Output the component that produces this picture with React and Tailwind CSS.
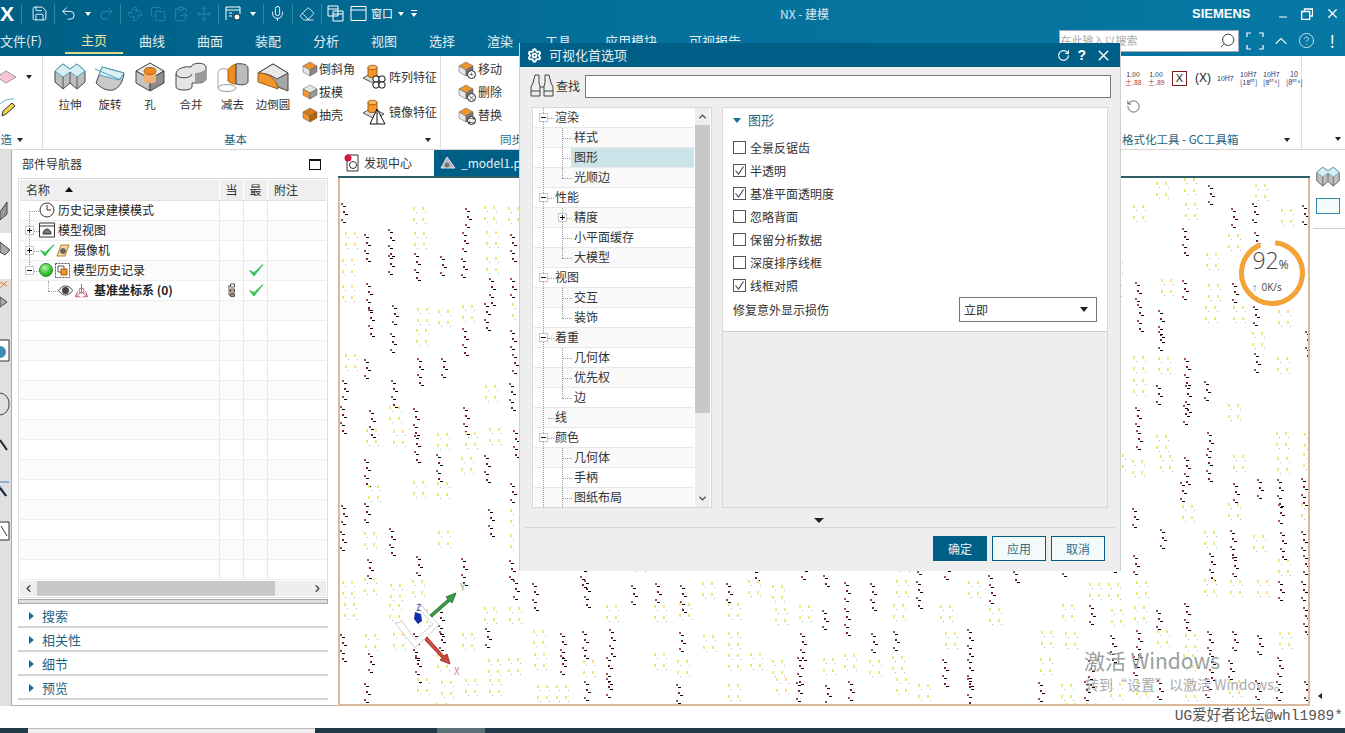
import React from 'react';
import { Save, Undo2, Redo2, Copy, ClipboardPaste, Fan, Move, Mic, Eraser, Minus, X, Search, ChevronUp, ChevronDown, ChevronLeft, ChevronRight, CircleHelp, RotateCw, RotateCcw, Settings } from 'lucide-react';

const menus = ['曲线', '曲面', '装配', '分析', '视图', '选择', '渲染', '工具'];

// canvas speckle, seeded so every run draws the same picture
function makeDots() {
  let s = 4711;
  const r = (n) => {
    s = (s + 0x6d2b79f5) | 0;
    let t = Math.imul(s ^ (s >>> 15), 1 | s);
    t = (t + Math.imul(t ^ (t >>> 7), 61 | t)) ^ t;
    return ((t ^ (t >>> 14)) >>> 0) % n;
  };
  const out = [];
  for (let cy = 0; cy < 22; cy++) {
    for (let cx = 0; cx < 41; cx++) {
      const t = r(10);
      const x = cx * 24 + r(6);
      const y = cy * 25 + r(8);
      if (t < 3) {
        const rows = 3 + r(2);
        for (let i = 0; i < rows; i++) {
          const dx = i % 2 ? 2 : 0;
          out.push(<rect key={`a${cx}-${cy}-${i}`} x={x + dx} y={y + i * 8} width="2" height="2" fill={i % 2 ? '#7a1f3a' : '#a04a66'} />);
          out.push(<rect key={`b${cx}-${cy}-${i}`} x={x + dx + 2} y={y + i * 8 + 3} width="3" height="1" fill="#000" />);
        }
      } else if (t < 6) {
        for (const ox of [0, 9]) {
          for (const oy of [0, 11]) {
            out.push(<rect key={`c${cx}-${cy}-${ox}-${oy}`} x={x + ox} y={y + oy} width="2" height="3" fill="#efe67e" />);
            out.push(<rect key={`d${cx}-${cy}-${ox}-${oy}`} x={x + ox + 3} y={y + oy + 5} width="1" height="1" fill="#b5b5c0" />);
          }
        }
      }
    }
  }
  return out;
}
const dots = makeDots();

function Caret({ className = '' }) {
  return <span className={`inline-block w-0 h-0 border-x-[3px] border-x-transparent border-t-[4px] border-t-[#222] ${className}`}></span>;
}

function Iso({ size = 32, top = '#e8e8e8', left = '#c4c4c4', right = '#8d8d8d', stroke = '#444', children }) {
  return (
    <svg width={size} height={size} viewBox="0 0 32 32">
      <polygon points="16,2 30,10 16,18 2,10" fill={top} stroke={stroke} />
      <polygon points="2,10 16,18 16,30 2,22" fill={left} stroke={stroke} />
      <polygon points="16,18 30,10 30,22 16,30" fill={right} stroke={stroke} />
      {children}
    </svg>
  );
}

function ExtrudeIcon({ size = 32 }) {
  return (
    <svg width={size} height={size} viewBox="0 0 32 32">
      <path d="M1 10 9 3l7 5 7-5 8 7v11l-8 7-7-6-7 6-8-7z" fill="#bdbdbd" stroke="#444" />
      <path d="M1 10 9 3l7 5 7-5 8 7-8 6-7-5-7 5z" fill="#d8eef4" stroke="#4aa3bd" />
      <path d="M9 16v12M23 16v12M16 11v11" stroke="#555" fill="none" />
    </svg>
  );
}
function RevolveIcon() {
  return (
    <svg width="32" height="32" viewBox="0 0 32 32">
      <path d="M2 22 8 6l22 6c-1 9-5 15-11 17-7 1-12-2-17-7z" fill="#c9c9c9" stroke="#444" />
      <path d="M8 6l22 6-5 7-20-5z" fill="#dff0f5" stroke="#4aa3bd" />
      <path d="M1 8l26 11" stroke="#4aa3bd" fill="none" />
    </svg>
  );
}
function HoleIcon() {
  return (
    <Iso>
      <path d="M10 10v10c0 3 12 3 12 0V10z" fill="#eeb072" />
      <ellipse cx="16" cy="10" rx="6" ry="3.5" fill="#f08c1e" stroke="#a85f10" />
    </Iso>
  );
}
function UniteIcon() {
  return (
    <svg width="32" height="32" viewBox="0 0 32 32">
      <path d="M1 13v13c0 4 16 4 16 0v-4h6c4 0 8-2 8-4V6c0-5-14-5-15 0-5-1-15 1-15 7z" fill="#e6e6e6" stroke="#444" />
      <path d="M20 22c4 0 11-1 11-5V6c0 4-7 6-11 6z" fill="#9a9a9a" />
      <path d="M1 13c1 5 15 5 16 0" fill="none" stroke="#444" />
    </svg>
  );
}
function SubtractIcon() {
  return (
    <svg width="32" height="32" viewBox="0 0 32 32">
      <ellipse cx="10" cy="27" rx="9" ry="3.5" fill="none" stroke="#999" />
      <path d="M1 11v16M19 22V8" stroke="#aaa" fill="none" />
      <path d="M11 9c3-5 8-6 8-6v20c-3 0-6-1-8-3z" fill="#f08c1e" stroke="#a85f10" />
      <path d="M19 3c4-1 12 0 12 4v14c0 2-6 4-12 2z" fill="#bbb" stroke="#444" />
      <path d="M1 11c2-4 6-4 10-2" fill="none" stroke="#999" />
    </svg>
  );
}
function BlendIcon() {
  return (
    <svg width="32" height="32" viewBox="0 0 32 32">
      <path d="M1 12 16 3l15 9v18l-10-4C18 18 10 13 1 12z" fill="#a6a6a6" stroke="#444" />
      <path d="M1 12 16 3l15 9-11 6C14 14 8 12 1 12z" fill="#e8e8e8" stroke="#444" />
      <path d="M1 12c10 0 19 6 20 16l-20-7z" fill="#f0962c" stroke="#a85f10" />
    </svg>
  );
}

function SmallIso({ top = '#e6e6e6', left = '#f0962c', right = '#8d8d8d' }) {
  return <Iso size={16} top={top} left={left} right={right} stroke="#555" />;
}

function PatternIcon({ mirror }) {
  return (
    <svg width="25" height="26" viewBox="0 0 25 26">
      <polygon points="1,14 10,9 22,15 13,20" fill="#ddd" stroke="#555" />
      <path d="M6 3v9c0 2 9 2 9 0V3z" fill="#f0962c" stroke="#a85f10" />
      <ellipse cx="10.5" cy="3.5" rx="4.5" ry="2.2" fill="#f7b564" stroke="#a85f10" />
      {mirror ? (
        <path d="M8 25 15 10l8 15zM15 10v15" fill="#fff" stroke="#111" />
      ) : (
        <g fill="#fff" stroke="#111">
          <circle cx="14" cy="15" r="3.2" />
          <circle cx="20" cy="15" r="3.2" />
          <circle cx="14" cy="21" r="3.2" />
          <circle cx="20" cy="21" r="3.2" />
        </g>
      )}
    </svg>
  );
}

function LargeTool({ w, label, children }) {
  return (
    <div className={`flex flex-col items-center ${w}`}>
      <div className="h-[37px] flex items-center justify-center">{children}</div>
      <span className="text-[11.5px] leading-[16px] text-[#333] mt-[1px] whitespace-nowrap">{label}</span>
    </div>
  );
}

function SmallTool({ label, icon }) {
  return (
    <div className="flex items-center h-[23px] gap-[1px]">
      {icon}
      <span className="text-[12px] text-[#333] whitespace-nowrap">{label}</span>
    </div>
  );
}

function MoveTool({ label, badge }) {
  return (
    <div className="flex items-center h-[23px] gap-[4px]">
      <span className="relative w-[16px] h-[16px] block">
        <SmallIso top="#f0962c" left="#e8e8e8" right="#777" />
        <span className="absolute right-[-2px] bottom-[-2px] w-[9px] h-[9px] rounded-full bg-white border border-[#222] text-[7px] leading-[7px] text-center text-[#111]">{badge}</span>
      </span>
      <span className="text-[12px] text-[#333] whitespace-nowrap">{label}</span>
    </div>
  );
}

function Gc({ children, className = '' }) {
  return <span className={`w-[16px] mr-[7px] shrink-0 text-center text-[7px] leading-[8px] text-[#1a2a70] ${className}`}>{children}</span>;
}

function Check({ size = 16 }) {
  return (
    <svg width={size} height={size} viewBox="0 0 16 16">
      <path d="M1.5 8.5 6 14 15 2.5 6.2 10.5z" fill="#3cc45f" stroke="#3cc45f" strokeLinejoin="round" />
    </svg>
  );
}

function Box({ sign }) {
  return (
    <span className="relative z-10 flex w-[9px] h-[9px] items-center justify-center bg-white border border-[#c8c8c8] text-[#111] shrink-0">
      <span className="absolute w-[5px] h-[1px] bg-[#111]"></span>
      {sign === '+' && <span className="absolute w-[1px] h-[5px] bg-[#111]"></span>}
    </span>
  );
}

// part navigator rows
function NavRow({ i, children, cur, late, alt }) {
  return (
    <div className={`grid grid-cols-[200px_24px_24px_1fr] h-[20px] border-b border-[#eeeeee] ${alt ? 'bg-[#fbfbfb]' : 'bg-white'}`}>
      <div className="relative flex items-center border-r border-[#e6e6e6] text-[12px] text-[#222] whitespace-nowrap" data-row={i}>{children}</div>
      <div className="flex items-center justify-center border-r border-[#e6e6e6]">{cur}</div>
      <div className="flex items-center justify-center border-r border-[#e6e6e6]">{late}</div>
      <div></div>
    </div>
  );
}

function Dotted({ className }) {
  return <span className={`absolute border-[#999] border-dotted ${className}`}></span>;
}

function SectionRow({ label }) {
  return (
    <div className="flex items-center h-[24px] border-b-2 border-[#d4d4d4] pl-[11px] pt-[2px] gap-[8px]">
      <span className="w-0 h-0 border-y-[4px] border-y-transparent border-l-[5px] border-l-[#1d6f91]"></span>
      <span className="text-[13px] text-[#1f6583]">{label}</span>
    </div>
  );
}

const treeRows = [
  { t: '渲染', lv: 0, box: '-' },
  { t: '样式', lv: 1 },
  { t: '图形', lv: 1, sel: true },
  { t: '光顺边', lv: 1, last: true },
  { t: '性能', lv: 0, box: '-' },
  { t: '精度', lv: 1, box: '+' },
  { t: '小平面缓存', lv: 1 },
  { t: '大模型', lv: 1, last: true },
  { t: '视图', lv: 0, box: '-' },
  { t: '交互', lv: 1 },
  { t: '装饰', lv: 1, last: true },
  { t: '着重', lv: 0, box: '-' },
  { t: '几何体', lv: 1 },
  { t: '优先权', lv: 1 },
  { t: '边', lv: 1, last: true },
  { t: '线', lv: 0 },
  { t: '颜色', lv: 0, box: '-' },
  { t: '几何体', lv: 1 },
  { t: '手柄', lv: 1 },
  { t: '图纸布局', lv: 1 },
];

function TreeRow({ row, index }) {
  return (
    <div className={`relative flex items-center h-[20px] border-b border-[#e8e8e8] text-[12px] text-[#333] ${index % 2 ? 'bg-[#fafafa]' : 'bg-white'}`}>
      <Dotted className="left-[9px] top-0 bottom-0 border-l" />
      {row.lv === 0 ? (
        <>
          <span className="ml-[5px] relative z-10">{row.box ? <Box sign={row.box} /> : <span className="block w-[9px]"></span>}</span>
          <Dotted className="left-[14px] w-[6px] top-[10px] border-t" />
          <span className="ml-[7px] pb-[1px] relative z-10">{row.t}</span>
        </>
      ) : (
        <>
          <Dotted className={`left-[28px] top-0 border-l ${row.last ? 'h-[10px]' : 'bottom-0'}`} />
          <Dotted className="left-[28px] w-[10px] top-[10px] border-t" />
          {row.box && <span className="absolute left-[24px] top-[5px]"><Box sign={row.box} /></span>}
          <span className={`absolute left-[37px] right-0 top-0 bottom-0 pl-[3px] pb-[1px] flex items-center ${row.sel ? 'bg-[#cde3ea]' : ''}`}>{row.t}</span>
        </>
      )}
    </div>
  );
}

function CheckRow({ label, on }) {
  return (
    <div className="flex items-center h-[23px] gap-[4px]">
      <span className="flex items-center justify-center w-[13px] h-[13px] bg-white border border-[#555]">
        {on && (
          <svg width="11" height="11" viewBox="0 0 11 11">
            <path d="M1.5 5.5 4.5 9 9.5 1.5" fill="none" stroke="#444" strokeWidth="1.1" />
          </svg>
        )}
      </span>
      <span className="text-[12px] text-[#333]">{label}</span>
    </div>
  );
}

function Dialog() {
  return (
    <div className="absolute left-[519px] top-[43px] w-[602px] h-[528px] flex flex-col bg-[#eeeeee] border border-[#d0d0d0] border-y-0">
      <div className="flex items-center h-[24px] bg-[#005f87] text-white pl-[7px] pr-[8px] shrink-0">
        <Settings size={15} strokeWidth={3} className="text-white" />
        <span className="ml-[7px] text-[13px] text-[#e8f1f5]">可视化首选项</span>
        <RotateCw size={13} strokeWidth={2} className="ml-auto" />
        <span className="ml-[7px] text-[14px] font-bold leading-none font-['Liberation_Sans',sans-serif]">?</span>
        <X size={17} strokeWidth={2} className="ml-[9px]" />
      </div>

      <div className="flex items-center h-[40px] pl-[10px] pr-[9px] pb-[2px] shrink-0">
        <svg width="24" height="24" viewBox="0 0 24 24" fill="none" stroke="#444">
          <path d="M5 1h4v8l1 3v10H1V13l2-4zM15 1h4l2 8 2 4v9h-9V12l1-3zM10 13h4M1 17h9M14 17h9" />
        </svg>
        <span className="ml-[2px] text-[12px] text-[#333] whitespace-nowrap">查找</span>
        <div className="ml-[5px] flex-1 h-[23px] bg-white border border-[#777]"></div>
      </div>

      <div className="flex h-[401px] shrink-0 pl-[12px] pr-[12px] gap-[10px]">
        <div className="flex w-[180px] h-[401px] bg-white border border-[#d8d8d8] px-[1px]">
          <div className="w-[160px] overflow-hidden">
            {treeRows.map((row, i) => <TreeRow key={i} row={row} index={i} />)}
          </div>
          <div className="flex flex-col w-[15px] ml-[1px] bg-[#eeeeee] items-center">
            <div className="h-[17px] flex items-center"><ChevronUp size={11} strokeWidth={3} className="text-[#444]" /></div>
            <div className="w-full h-[288px] bg-[#c8c8c8]"></div>
            <div className="mt-auto h-[17px] flex items-center"><ChevronDown size={11} strokeWidth={3} className="text-[#444]" /></div>
          </div>
        </div>

        <div className="flex flex-col w-[386px] h-[401px] bg-[#eeeeee] border border-[#d8d8d8]">
          <div className="bg-white border-b border-[#cccccc] h-[224px] pl-[10px] pr-[10px]">
            <div className="flex items-center h-[24px] gap-[7px] mb-[4px]">
              <span className="w-0 h-0 border-x-[4px] border-x-transparent border-t-[5px] border-t-[#1d6f91]"></span>
              <span className="text-[13px] text-[#1f6583]">图形</span>
            </div>
            <CheckRow label="全景反锯齿" />
            <CheckRow label="半透明" on />
            <CheckRow label="基准平面透明度" on />
            <CheckRow label="忽略背面" />
            <CheckRow label="保留分析数据" />
            <CheckRow label="深度排序线框" />
            <CheckRow label="线框对照" on />
            <div className="flex items-center justify-between">
              <span className="text-[12px] text-[#333]">修复意外显示损伤</span>
              <div className="flex items-center justify-between w-[138px] h-[25px] bg-white border border-[#777] px-[4px] text-[12px] text-[#333]">
                立即
                <Caret className="mr-[4px] !border-x-[4px] !border-t-[5px]" />
              </div>
            </div>
          </div>
        </div>
      </div>

      <div className="flex justify-center h-[19px] items-start pt-[10px] pr-[2px] shrink-0"><Caret className="!border-x-[5px] !border-t-[5px]" /></div>
      <div className="mx-[5px] border-t border-[#d4d4d4]"></div>
      <div className="flex justify-end gap-[5px] h-[43px] pt-[8px] pr-[15px] shrink-0">
        <button className="w-[54px] h-[25px] bg-[#005f87] text-[12px] text-[#e6f2f7]">确定</button>
        <button className="w-[54px] h-[25px] bg-[#f3fafc] border border-[#005f87] text-[12px] text-[#2e6d88]">应用</button>
        <button className="w-[54px] h-[25px] bg-[#f3fafc] border border-[#005f87] text-[12px] text-[#2e6d88]">取消</button>
      </div>
    </div>
  );
}

function Gauge() {
  return (
    <div className="absolute left-[897px] top-[60px] w-[70px] h-[70px] rounded-full">
      <svg width="70" height="70" viewBox="0 0 70 70" className="absolute inset-0">
        <circle cx="35" cy="35" r="34.5" fill="#ffffff" fillOpacity="0.6" />
        <circle cx="35" cy="35" r="30.5" fill="#fff" stroke="#f4a338" strokeWidth="5" strokeDasharray="176 16" transform="rotate(-84 35 35)" />
      </svg>
      <div className="absolute left-0 right-[3px] top-[11px] text-center text-[#444] leading-none font-['Open_Sans',sans-serif]">
        <span className="text-[23px] font-light">92</span><span className="text-[12px]">%</span>
      </div>
      <div className="absolute left-[15px] top-[43px] flex items-center gap-[4px] text-[10px] leading-none text-[#444] font-['Open_Sans',sans-serif]">
        <span className="text-[#2b86c5] text-[11px] font-bold">↑</span>
        <span>0K/s</span>
      </div>
    </div>
  );
}

function Triad() {
  return (
    <svg className="absolute left-[52px] top-[402px]" width="80" height="100" viewBox="390 580 80 100">
      <path d="M417 603 437 625 413 648 393 623 401 622 413 640 431 624 416 608z" fill="#fff" stroke="#cfcfcf" />
      <path d="M428 615 446 599 444 597 454 593 450 603 448 601 430 617z" fill="#3f9a48" stroke="#2f7a38" />
      <path d="M425 637 442 656 445 654 448 664 438 660 440 658 423 640z" fill="#cc4a40" stroke="#a83830" />
      <path d="M413 612 419 614 420 621 416 624 412 619z" fill="#1230b0" />
      <text x="414" y="611" fontSize="9" fill="#3a55c8">Z</text>
      <text x="458" y="591" fontSize="10" fill="#80b58a">Y</text>
      <text x="452" y="675" fontSize="10" fill="#d98a8a">X</text>
    </svg>
  );
}

export default function App() {
  return (
    <div className="relative w-[1345px] h-[733px] overflow-hidden bg-white flex flex-col font-['Noto_Sans_CJK_SC','Liberation_Sans',sans-serif]">
      {/* title bar and menu */}
      <div className="h-[56px] shrink-0 bg-gradient-to-r from-[#005f85] via-[#04719c] to-[#0678a3] text-white">
        <div className="relative flex items-center h-[27px] text-white">
          <span className="w-[21px] text-[21px] font-bold text-white leading-none font-['Liberation_Sans',sans-serif]">X</span>
          <span className="w-[1px] h-[20px] bg-[#2f87a8]"></span>
          <Save size={17} strokeWidth={1.3} className="ml-[9px]" />
          <span className="ml-[6px] w-[1px] h-[20px] bg-[#2f87a8]"></span>
          <Undo2 size={17} strokeWidth={1.3} className="ml-[5px]" />
          <Caret className="ml-[8px] !border-t-white" />
          <Redo2 size={17} strokeWidth={1.3} className="ml-[7px] text-[#2f8db0]" />
          <span className="ml-[5px] w-[1px] h-[20px] bg-[#2f87a8]"></span>
          <Fan size={16} strokeWidth={1.2} className="ml-[6px] text-[#2f8db0]" />
          <Copy size={16} strokeWidth={1.2} className="ml-[7px] text-[#2f8db0]" />
          <ClipboardPaste size={16} strokeWidth={1.2} className="ml-[7px] text-[#2f8db0]" />
          <Move size={16} strokeWidth={1.2} className="ml-[7px] text-[#2f8db0]" />
          <span className="ml-[6px] w-[1px] h-[20px] bg-[#2f87a8]"></span>
          <svg width="17" height="17" viewBox="0 0 17 17" className="ml-[6px]" fill="none" stroke="#fff">
            <path d="M1 15V2h14v7M1 5h14" />
            <circle cx="12" cy="12" r="3" fill="#fff" stroke="#333" />
            <path d="M4 8h3M4 11h3" />
          </svg>
          <Caret className="ml-[8px] !border-t-white" />
          <span className="ml-[7px] w-[1px] h-[20px] bg-[#2f87a8]"></span>
          <Mic size={17} strokeWidth={1.3} className="ml-[5px]" />
          <span className="ml-[6px] w-[1px] h-[20px] bg-[#2f87a8]"></span>
          <Eraser size={16} strokeWidth={1.3} className="ml-[6px]" />
          <span className="ml-[6px] w-[1px] h-[20px] bg-[#2f87a8]"></span>
          <svg width="17" height="17" viewBox="0 0 17 17" className="ml-[5px]" fill="none" stroke="#fff">
            <path d="M1 1h10v10H1zM1 4h10M6 6h10v10H6zM6 9h10" />
          </svg>
          <svg width="17" height="17" viewBox="0 0 17 17" className="ml-[6px]" fill="none" stroke="#fff">
            <path d="M1 1.5h15v14H1zM1 5h15" />
          </svg>
          <span className="ml-[4px] text-[11px] whitespace-nowrap">窗口</span>
          <Caret className="ml-[5px] !border-t-white" />
          <span className="ml-[7px] flex flex-col items-center gap-[2px]">
            <span className="w-[6px] h-[1px] bg-white"></span>
            <Caret className="!border-t-white" />
          </span>
          <span className="absolute left-[780px] top-[5px] text-[12px] text-[#d8e8ee] whitespace-nowrap">NX - 建模</span>
          <span className="absolute left-[1192px] top-[6px] text-[13px] font-bold leading-[15px] text-white font-['Liberation_Sans',sans-serif]">SIEMENS</span>
          <span className="ml-auto flex items-center gap-[12px] pr-[5px]">
            <Minus size={12} strokeWidth={2} className="mt-[7px]" />
            <svg width="12" height="12" viewBox="0 0 12 12" fill="none" stroke="#fff" strokeWidth="1.3">
              <path d="M3.500 3V1h8v7H9M.7 3.500h8v7.800h-8z" />
            </svg>
            <X size={15} strokeWidth={2} />
          </span>
        </div>
        <div className="flex items-center h-[29px] pb-[2px] pr-[10px] text-[13px] text-[#e2edf2]">
          <span className="w-[65px]">文件(F)</span>
          <span className="w-[58px] h-full flex items-center justify-center text-[#e5e2a0] border-b-2 border-[#dcd98a]">主页</span>
          {menus.map((m) => <span key={m} className="w-[58px] text-center shrink-0">{m}</span>)}
          <span className="ml-[18px] w-[58px] shrink-0 whitespace-nowrap">应用模块</span>
          <span className="ml-[26px] w-[58px] shrink-0 whitespace-nowrap">可视报告</span>
          <div className="ml-auto flex items-center justify-between w-[180px] h-[22px] bg-white border border-[#aab] pl-[1px] pr-[2px] text-[11px] text-[#aaa]">
            在此输入以搜索
            <Search size={17} strokeWidth={1.3} className="text-[#333] -scale-x-100" />
          </div>
          <svg width="18" height="18" viewBox="0 0 18 18" className="ml-[7px]" fill="none" stroke="#fff" strokeWidth="1.2">
            <path d="M1 5V1h4M13 1h4v4M17 13v4h-4M5 17H1v-4" />
          </svg>
          <ChevronUp size={20} strokeWidth={1.3} className="ml-[7px]" />
          <CircleHelp size={17} strokeWidth={1.2} className="ml-[7px]" />
          <span className="ml-[15px] text-[17px] leading-none text-white">!</span>
        </div>
      </div>

      {/* ribbon */}
      <div className="flex h-[94px] shrink-0 bg-white border-b border-[#d6d6d6]">
        <div className="flex flex-col w-[43px] border-r border-[#dddddd] shrink-0 overflow-hidden">
          <div className="flex-1 pt-[9px]">
            <div className="flex items-center h-[24px]">
              <svg width="17" height="16" viewBox="0 0 17 16"><polygon points="-3,8 6,2 16,8 6,14" fill="#fbc5d8" stroke="#999" /></svg>
              <Caret className="ml-[9px]" />
            </div>
            <svg width="17" height="24" viewBox="0 0 17 24" fill="none" className="mt-[6px]">
              <path d="M0 9c4-4 8-5 14-5" stroke="#5fb7cf" />
              <path d="M2 21l1-5L12 8l3 3-9 8z" fill="#f6d24d" stroke="#333" />
            </svg>
          </div>
          <div className="flex items-center h-[18px] text-[11.5px] text-[#1f6583]">
            <span className="-ml-[11px] whitespace-nowrap">构造</span>
            <Caret className="ml-[5px]" />
          </div>
        </div>

        <div className="flex flex-col w-[398px] border-r border-[#dddddd] shrink-0">
          <div className="flex flex-1 pl-[7px] pt-[2px]">
            <LargeTool w="w-[40px]" label="拉伸"><ExtrudeIcon /></LargeTool>
            <LargeTool w="w-[40px]" label="旋转"><RevolveIcon /></LargeTool>
            <LargeTool w="w-[40px]" label="孔"><HoleIcon /></LargeTool>
            <LargeTool w="w-[42px]" label="合并"><UniteIcon /></LargeTool>
            <LargeTool w="w-[41px]" label="减去"><SubtractIcon /></LargeTool>
            <LargeTool w="w-[40px]" label="边倒圆"><BlendIcon /></LargeTool>
            <div className="ml-[9px] -mt-[1px]">
              <SmallTool label="倒斜角" icon={<SmallIso top="#f0962c" left="#e6e6e6" right="#888" />} />
              <SmallTool label="拔模" icon={<SmallIso top="#e6e6e6" left="#f0962c" right="#999" />} />
              <SmallTool label="抽壳" icon={<SmallIso top="#d97a18" left="#f0962c" right="#b56410" />} />
            </div>
            <div className="ml-[7px] pt-[6px]">
              <div className="flex items-center h-[26px] gap-[2px]"><PatternIcon /><span className="text-[12px] text-[#333] whitespace-nowrap">阵列特征</span></div>
              <div className="flex items-center h-[26px] gap-[2px] mt-[9px]"><PatternIcon mirror /><span className="text-[12px] text-[#333] whitespace-nowrap">镜像特征</span></div>
            </div>
          </div>
          <div className="relative flex justify-center items-center h-[18px] text-[11.5px] text-[#1f6583] pr-[12px]">
            基本
            <Caret className="absolute right-[9px] top-[7px]" />
          </div>
        </div>

        <div className="flex flex-col w-[680px] shrink-0">
          <div className="flex-1 pl-[17px] pt-[1px]">
            <MoveTool label="移动" badge="+" />
            <MoveTool label="删除" badge="×" />
            <MoveTool label="替换" badge="⇄" />
          </div>
          <div className="h-[18px] pl-[59px] text-[11.5px] text-[#1f6583] whitespace-nowrap">同步建模</div>
        </div>

        <div className="flex flex-col w-[181px] border-r border-[#dddddd] shrink-0">
          <div className="flex-1 pl-[4px] pt-[14px]">
            <div className="flex items-center h-[16px]">
              <Gc className="!text-[#333]">1.00<br /><span className="text-[#a33]">±.88</span></Gc>
              <Gc className="mr-[8px] !text-[#333]">1.00<br /><span className="text-[#a33]">±.89</span></Gc>
              <span className="flex items-center justify-center w-[15px] h-[15px] mr-[8px] shrink-0 border border-[#7a1f1f] text-[11px] text-[#222] font-['Liberation_Sans',sans-serif]">X</span>
              <span className="w-[15px] mr-[7px] shrink-0 text-[12px] leading-none text-[#222] whitespace-nowrap font-['Liberation_Sans',sans-serif]">(X)</span>
              <Gc>10H7</Gc>
              <Gc>10H7<br />[18⁰¹]</Gc>
              <Gc>10H7<br />[8⁰¹⁹]</Gc>
              <Gc>10<br />[8⁰¹⁹]</Gc>
            </div>
            <RotateCcw size={15} strokeWidth={1.2} className="mt-[13px] ml-[1px] text-[#333]" />
          </div>
          <div className="relative flex items-center h-[18px] pl-[1px] text-[11.5px] text-[#1f6583] whitespace-nowrap">
            格式化工具 - GC工具箱
            <Caret className="absolute right-[11px] top-[7px]" />
          </div>
        </div>

        <div className="relative flex-1">
          <Caret className="absolute right-[4px] top-[81px]" />
        </div>
      </div>

      {/* work area */}
      <div className="flex flex-1 min-h-0">
        <div className="relative w-[12px] shrink-0 bg-[#e0e0e0] border-r border-[#aaaaaa] overflow-hidden">
          <div className="absolute left-0 right-[0px] top-[83px] h-[46px] bg-white"></div>
          <svg className="absolute left-0 top-0" width="11" height="400" viewBox="0 0 11 400" fill="none">
            <path d="M0 62 7 52v12L0 70z" fill="#999" stroke="#444" />
            <path d="M0 92l10 8-5 5-5-3z" fill="#aaa" stroke="#444" />
            <path d="M0 138 7 131M0 132l7 4" stroke="#e0862c" />
            <path d="M0 147l7 5-7 5z" fill="#aaa" stroke="#444" />
            <path d="M0 190h9v21H0" fill="#fff" stroke="#333" />
            <circle cx="0" cy="202" r="6" fill="#3a8fb0" />
            <path d="M0 243a10 10 0 0 1 9 11 10 10 0 0 1-9 11" stroke="#444" />
            <path d="M0 290l7 10" stroke="#222" strokeWidth="2" />
            <path d="M0 332h9M0 336l7 10" stroke="#3a7fd0" />
            <path d="M0 338l6 8" stroke="#222" strokeWidth="2" />
            <path d="M0 372h9v18H0" fill="#fff" stroke="#333" />
            <path d="M1 376l6 10" stroke="#333" />
          </svg>
        </div>

        {/* part navigator */}
        <div className="flex flex-col w-[326px] shrink-0 pl-[6px] pr-[10px] border-b border-[#b5b5b5]">
          <div className="flex items-center justify-between h-[28px] pl-[4px] pr-[7px] text-[12px] text-[#333]">
            部件导航器
            <span className="w-[12px] h-[11px] border border-[#111] border-t-2"></span>
          </div>
          <div className="h-[420px] border border-[#dddddd] p-[1px] bg-white flex flex-col">
            <div className="grid grid-cols-[200px_24px_24px_1fr] h-[21px] bg-[#efefef] text-[12px] text-[#333] border-b border-[#e0e0e0]">
              <div className="flex items-center pl-[6px] border-r border-white">名称<span className="ml-[15px] w-0 h-0 border-x-[4px] border-x-transparent border-b-[5px] border-b-[#111]"></span></div>
              <div className="flex items-center justify-center border-r border-white">当</div>
              <div className="flex items-center justify-center border-r border-white">最</div>
              <div className="flex items-center pl-[6px]">附注</div>
            </div>
            <NavRow i={0}>
              <Dotted className="left-[9px] top-[10px] bottom-0 border-l" />
              <Dotted className="left-[9px] w-[10px] top-[10px] border-t" />
              <svg width="16" height="16" viewBox="0 0 16 16" className="ml-[19px] relative" fill="#fff" stroke="#333"><circle cx="8" cy="8" r="7" /><path d="M8 3v5h4" fill="none" /></svg>
              <span className="ml-[3px]">历史记录建模模式</span>
            </NavRow>
            <NavRow i={1} alt>
              <Dotted className="left-[9px] top-0 bottom-0 border-l" />
              <span className="ml-[5px] relative"><Box sign="+" /></span>
              <Dotted className="left-[14px] w-[5px] top-[10px] border-t" />
              <svg width="16" height="16" viewBox="0 0 16 16" className="ml-[5px]" fill="none" stroke="#333"><path d="M.5 1h15v14H.5zM.5 4h15" /><path d="M4 12c0-3 2-5 4-5s4 2 4 5z" fill="#777" /></svg>
              <span className="ml-[3px]">模型视图</span>
            </NavRow>
            <NavRow i={2}>
              <Dotted className="left-[9px] top-0 bottom-0 border-l" />
              <span className="ml-[5px] relative"><Box sign="+" /></span>
              <Dotted className="left-[14px] w-[5px] top-[10px] border-t" />
              <span className="ml-[5px]"><Check /></span>
              <svg width="14" height="15" viewBox="0 0 14 15" className="ml-[1px]" fill="#f4d9b0" stroke="#c77a1e"><path d="M1 13 5 2h8l-4 11z" /><circle cx="7" cy="8" r="2.5" fill="#666" stroke="#666" /></svg>
              <span className="ml-[4px]">摄像机</span>
            </NavRow>
            <NavRow i={3} alt late={<Check />}>
              <Dotted className="left-[9px] top-0 h-[6px] border-l" />
              <span className="ml-[5px] relative"><Box sign="-" /></span>
              <Dotted className="left-[14px] w-[5px] top-[10px] border-t" />
              <span className="ml-[5px] w-[14px] h-[14px] rounded-full bg-[radial-gradient(circle_at_40%_30%,#b8f5a8,#2fbf2f_60%,#178a17)] border border-[#2a8a2a]"></span>
              <svg width="15" height="15" viewBox="0 0 15 15" className="ml-[2px]" fill="#fff" stroke="#555"><path d="M.5.5h14v14H.5z" strokeDasharray="2 1" /><path d="M3 3h6v6H3z" /><path d="M6 6h6v6H6z" fill="#f0962c" stroke="#a85f10" /></svg>
              <span className="ml-[3px]">模型历史记录</span>
            </NavRow>
            <NavRow
              i={4}
              cur={<svg width="8" height="14" viewBox="0 0 8 14" fill="none" stroke="#555"><path d="M2.5 1h4v3h-4zM2.5 6h4v3h-4zM2.5 10.5h4v3h-4zM1 2v10h1.5M1 7.5h1.5" /><path d="M3 6.5h3v2H3zM3 11h3v2H3z" fill="#d98a2c" stroke="none" /></svg>}
              late={<Check />}
            >
              <Dotted className="left-[28px] top-0 h-[10px] border-l" />
              <Dotted className="left-[28px] w-[10px] top-[10px] border-t" />
              <svg width="15" height="11" viewBox="0 0 15 11" className="ml-[38px]"><path d="M.5 5.5C3 2 5 1 7.5 1s5 1 7 4.5c-2 3.5-4.500 4.500-7 4.500s-4.500-1-7-4.500z" fill="#eee" stroke="#444" /><circle cx="7.500" cy="5.500" r="3.500" fill="#444" /></svg>
              <svg width="15" height="15" viewBox="0 0 15 15" className="ml-[1px]" fill="none" stroke="#b85f85"><path d="M7.500 1v8M7.500 9l-6 4.500M7.500 9l6 4.500M3.500 8.500l-2 5 5 .5M11.500 8.500l2 5-5 .5" /><circle cx="7.500" cy="7.500" r="2.500" /></svg>
              <span className="ml-[5px] font-bold text-[#222]">基准坐标系 (0)</span>
            </NavRow>
            {Array.from({ length: 14 }).map((_, i) => <NavRow key={i} i={i + 5} alt={i % 2 === 0} />)}
            <div className="flex items-center justify-between h-[15px] mt-[1px] bg-[#eeeeee]">
              <div className="flex items-center w-[17px] justify-center"><ChevronLeft size={11} strokeWidth={3} className="text-[#444]" /></div>
              <div className="w-[238px] h-full bg-[#c8c8c8]"></div>
              <div className="ml-auto flex items-center w-[17px] justify-center"><ChevronRight size={11} strokeWidth={3} className="text-[#444]" /></div>
            </div>
          </div>
          <div className="h-[5px] bg-[#dddddd] border border-[#a8a8a8] mt-[1px]"></div>
          <div>
            <SectionRow label="搜索" />
            <SectionRow label="相关性" />
            <SectionRow label="细节" />
            <SectionRow label="预览" />
          </div>
        </div>

        {/* graphics window */}
        <div className="flex flex-col w-[972px] shrink-0">
          <div className="flex h-[28px] items-stretch border-b-2 border-[#2f5f66] text-[12px]">
            <div className="flex items-center w-[96px] pl-[6px] gap-[4px] text-[#333]">
              <svg width="16" height="18" viewBox="0 0 16 18" fill="none" stroke="#333"><path d="M3 1h11v16H3z" /><circle cx="4" cy="4" r="3.500" fill="#d9143a" stroke="none" /><circle cx="9" cy="11" r="3.500" /></svg>
              发现中心
            </div>
            <div className="flex items-center w-[110px] pl-[6px] gap-[5px] bg-[#005f87] text-[#e6f0f4] whitespace-nowrap">
              <svg width="16" height="14" viewBox="0 0 16 14"><path d="M1 12 7 1l8 11z" fill="#bbb" stroke="#dde" /><circle cx="7" cy="9" r="2.500" fill="#777" /></svg>
              _model1.prt
            </div>
          </div>
          <div className="relative flex-1 bg-white border-l-2 border-r-2 border-b-2 border-[#dcb898] overflow-hidden">
            <svg className="absolute inset-0" width="970" height="528" shapeRendering="crispEdges">{dots}</svg>
            <Triad />
            <Gauge />
            <div className="absolute left-[744px] top-[469px] text-[21px] leading-[26px] text-[#9aa0a0] whitespace-nowrap">激活 Windows</div>
            <div className="absolute left-[745px] top-[497px] text-[14px] leading-[18px] text-[#a8acac] whitespace-nowrap">转到“设置”以激活 Windows。</div>
          </div>
        </div>

        <div className="relative flex-1 flex flex-col items-center pt-[15px] border-b border-white">
          <ExtrudeIcon size={24} />
          <span className="block w-[24px] h-[16px] mt-[9px] bg-[#f3fbfd] border border-[#2e8ba8]"></span>
          <span className="block w-full ml-[5px] mt-[14px] border-t border-[#d0d0d0]"></span>
          <span className="absolute left-[8px] bottom-[6px] w-0 h-0 border-y-[3px] border-y-transparent border-r-[4px] border-r-[#222]"></span>
        </div>
      </div>

      {/* footer */}
      <div className="flex items-center justify-end h-[22px] shrink-0 bg-white pr-[2px] text-[14.5px] text-[#555] whitespace-nowrap font-['Liberation_Mono','Noto_Sans_CJK_SC',monospace]">UG爱好者论坛@whl1989*</div>
      <div className="flex h-[5px] shrink-0 bg-[#1f3a46]">
        <div className="ml-[28px] w-[287px] bg-[#eeeeee] border-t border-[#bbbbbb]"></div>
        <div className="ml-[122px] w-[48px] bg-[#5b7077]"></div>
      </div>

      <Dialog />
    </div>
  );
}
